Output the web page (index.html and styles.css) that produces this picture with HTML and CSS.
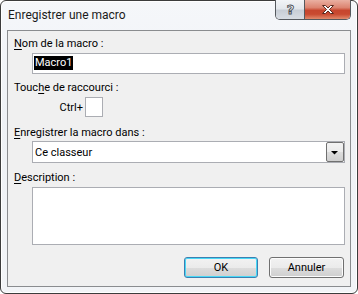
FILE: index.html
```html
<!DOCTYPE html>
<html lang="fr">
<head>
<meta charset="utf-8">
<title>Enregistrer une macro</title>
<link rel="stylesheet" href="styles.css">
</head>
<body>
<div class="window">
  <div class="titlebar">
    <span class="title">Enregistrer une macro</span>
    <div class="caption-btns">
      <div class="cbtn help">
        <svg width="29" height="19" viewBox="0 0 29 19"><text x="14.5" y="14" text-anchor="middle" class="qmark">?</text></svg>
      </div>
      <div class="cbtn close">
        <svg width="46" height="19" viewBox="0 0 46 19"><path d="M17.5 5.5 L20.5 5.5 L23 8 L25.5 5.5 L28.5 5.5 L24.5 9.5 L28.5 13.5 L25.5 13.5 L23 11 L20.5 13.5 L17.5 13.5 L21.5 9.5 Z" fill="#fff" stroke="#5a2a20" stroke-width="1" stroke-linejoin="round"/></svg>
      </div>
    </div>
  </div>
  <div class="client">
    <label class="lbl"><u>N</u>om de la macro :</label>
    <div class="field name"><span class="sel">Macro1</span></div>
    <label class="lbl lbl2">Touc<u>h</u>e de raccourci :</label>
    <div class="ctrl-row"><span class="ctrl">Ctrl+</span><div class="keybox"></div></div>
    <label class="lbl lbl3"><u>E</u>nregistrer la macro dans :</label>
    <div class="field combo"><span class="combo-text">Ce classeur</span><div class="dd"><svg width="16" height="18" viewBox="0 0 16 18"><path d="M4 8 H11 L7.5 11.5 Z" fill="#000"/></svg></div></div>
    <label class="lbl lbl4"><u>D</u>escription :</label>
    <div class="field desc"></div>
    <div class="buttons">
      <button class="btn ok">OK</button>
      <button class="btn cancel">Annuler</button>
    </div>
  </div>
</div>
</body>
</html>
```

FILE: styles.css
```css
* { box-sizing: border-box; }
html, body { margin: 0; padding: 0; background: #ffffff; }
body {
  font-family: Roboto, Lato, "Noto Sans", sans-serif;
  font-size: 11px;
  color: #000;
}
.window {
  width: 358px;
  height: 294px;
  border: 1px solid #3c3c3c;
  border-radius: 6px;
  background: linear-gradient(180deg, #f5f7fa 0%, #eef1f5 40%, #f2f4f7 100%);
  display: flex;
  flex-direction: column;
  padding: 0 6px 6px 6px;
  box-shadow: inset 0 0 0 1px #ffffff;
}
.titlebar {
  height: 29px;
  display: flex;
  justify-content: space-between;
  align-items: flex-start;
}
.title {
  padding-top: 7px;
  padding-left: 1px;
  line-height: 15px;
  font-size: 12px;
  color: #1a1a1a;
}
.caption-btns {
  display: flex;
  margin-top: -1px;
  border: 1px solid #55595e;
  border-top: none;
  border-radius: 0 0 5px 5px;
  overflow: hidden;
  height: 20px;
}
.cbtn { height: 19px; }
.cbtn svg { display: block; }
.help {
  width: 29px;
  border-right: 1px solid #55595e;
  background: linear-gradient(180deg, #f2f4f7 0%, #e3e7ec 45%, #c8ced6 55%, #d8dde3 100%);
}
.close {
  width: 45px;
  background: linear-gradient(180deg, #eab0a2 0%, #dc8470 40%, #c7462e 55%, #c94a30 75%, #e28a6c 100%);
}
.qmark {
  font-family: "DejaVu Sans", sans-serif;
  font-size: 13px;
  font-weight: bold;
  fill: #f4f6f8;
  stroke: #4a4f55;
  stroke-width: 0.9;
}
.client {
  flex: 1;
  border: 1px solid #8a8c8f;
  background: #f0f0f0;
  padding: 5px 5px 0 6px;
  display: flex;
  flex-direction: column;
}
.lbl {
  display: block;
  line-height: 15px;
  height: 15px;
}
.lbl u { text-decoration-thickness: 1px; text-underline-offset: 2px; }
.field {
  margin-left: 18px;
  border: 1px solid #abadb3;
  background: #fff;
}
.name {
  margin-top: 2px;
  height: 21px;
  padding: 2px 0 0 1px;
}
.sel {
  display: inline-block;
  background: #000;
  color: #fff;
  line-height: 14px;
  padding: 0 1px 0 1px;
}
.lbl2 { margin-top: 6px; }
.ctrl-row {
  margin-top: 2px;
  height: 20px;
  display: flex;
  align-items: center;
  padding-left: 42px;
}
.ctrl {
  line-height: 15px;
  width: 29px;
  text-align: right;
  padding-right: 2px;
}
.keybox {
  width: 18px;
  height: 20px;
  border: 1px solid #abadb3;
  background: #fff;
}
.lbl3 { margin-top: 8px; }
.combo {
  margin-top: 1px;
  height: 22px;
  display: flex;
  align-items: center;
  justify-content: space-between;
  padding-left: 2px;
}
.combo-text { line-height: 15px; }
.dd {
  width: 18px;
  height: 20px;
  border: 1px solid #707070;
  border-radius: 2px;
  background: linear-gradient(180deg, #f3f3f3 0%, #ebebeb 50%, #dddddd 51%, #cfcfcf 100%);
}
.dd svg { display: block; }
.lbl4 { margin-top: 7px; }
.desc {
  margin-top: 2px;
  height: 58px;
}
.buttons {
  margin-top: 12px;
  display: flex;
  justify-content: flex-end;
  gap: 11px;
  padding-right: 1px;
}
.btn {
  font-family: inherit;
  font-size: 11px;
  color: #000;
  height: 21px;
  padding: 0;
  border: 1px solid #707070;
  border-radius: 3px;
  background: linear-gradient(180deg, #f2f2f2 0%, #ebebeb 50%, #dddddd 51%, #cfcfcf 100%);
  box-shadow: inset 0 0 0 1px #fcfcfc;
}
.ok {
  width: 74px;
  border-color: #3c7fb1;
  box-shadow: inset 0 0 0 1px #48d8f6;
}
.cancel { width: 75px; }
```
